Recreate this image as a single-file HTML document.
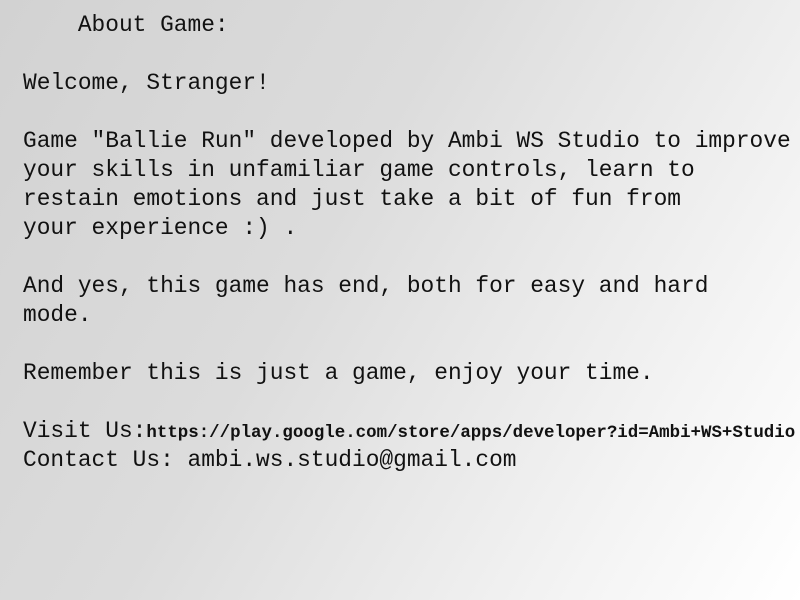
<!DOCTYPE html>
<html><head><style>
html,body{margin:0;padding:0;width:800px;height:600px;overflow:hidden;}
body{background:linear-gradient(120deg,#d2d2d2 0%,#dcdcdc 40%,#f4f4f4 80%,#ffffff 100%);}
pre{position:absolute;left:23px;top:11px;margin:0;font-family:"Liberation Mono",monospace;font-size:22.85px;line-height:29px;color:#111;white-space:pre;}
.u{font-size:17.45px;font-weight:bold;line-height:0;}
</style></head><body>
<pre>    About Game:

Welcome, Stranger!

Game "Ballie Run" developed by Ambi WS Studio to improve
your skills in unfamiliar game controls, learn to
restain emotions and just take a bit of fun from
your experience :) .

And yes, this game has end, both for easy and hard
mode.

Remember this is just a game, enjoy your time.

Visit Us:<span class="u">https://play.google.com/store/apps/developer?id=Ambi+WS+Studio</span>
Contact Us: ambi.ws.studio@gmail.com</pre>
</body></html>
